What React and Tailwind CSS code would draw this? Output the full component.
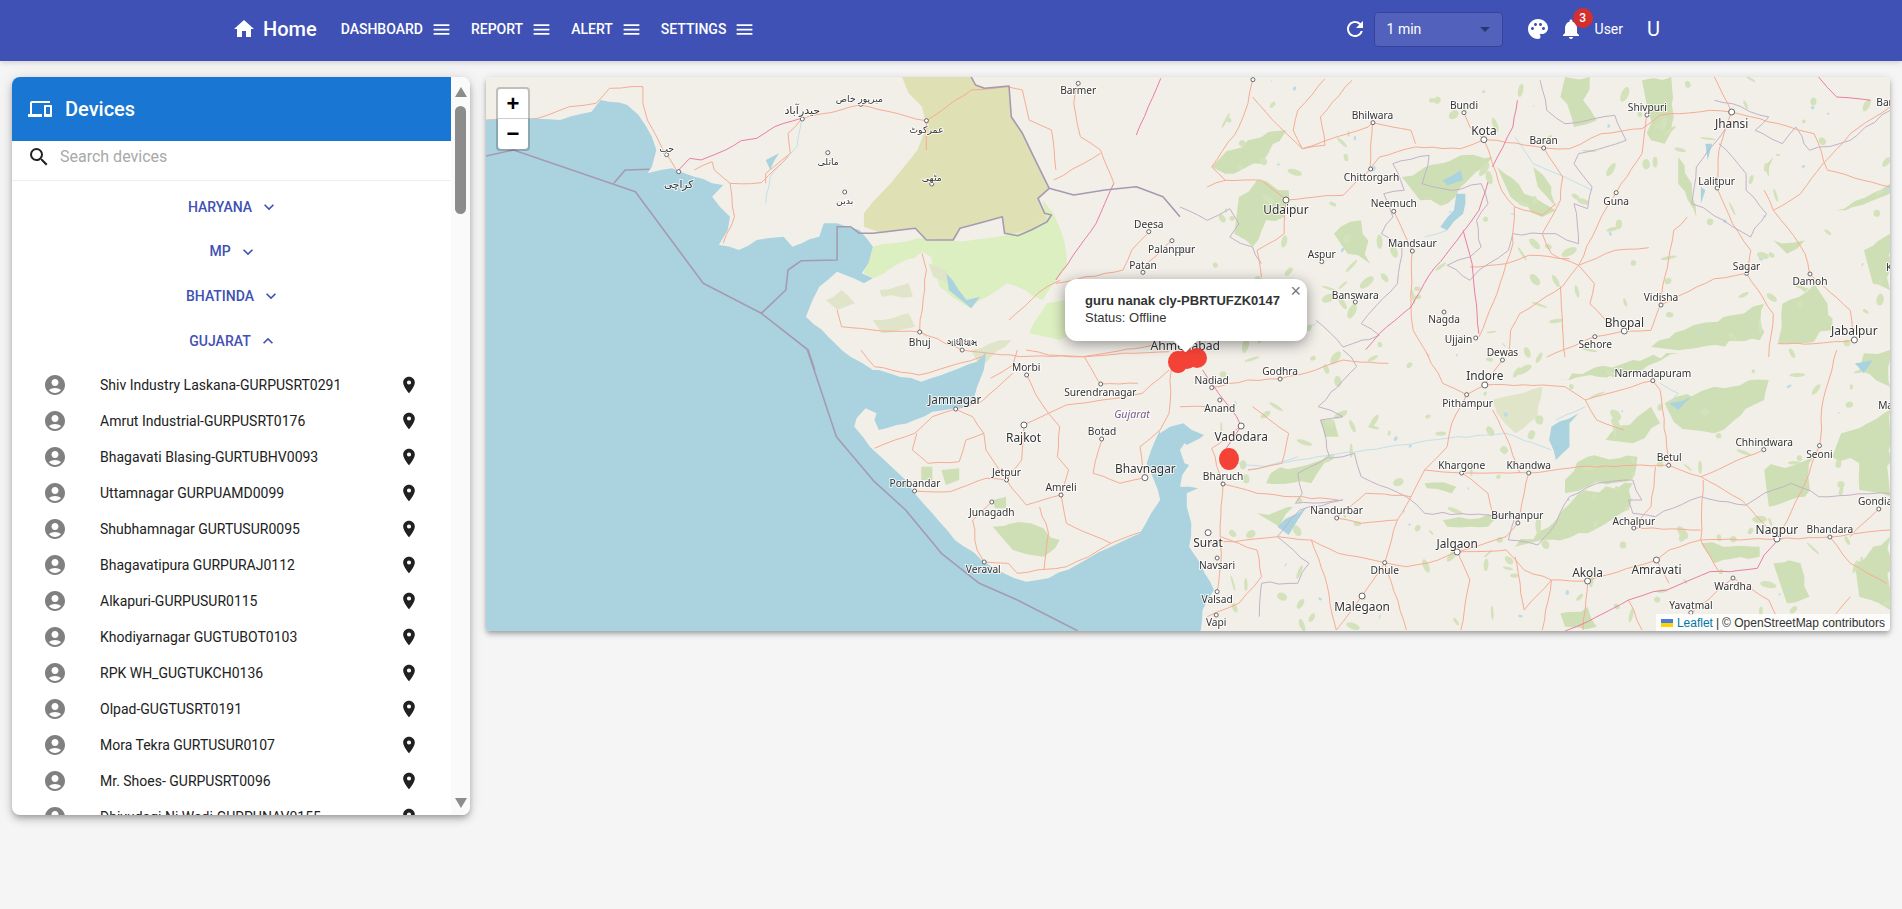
import {
  MdAccountCircle,
  MdArrowDropDown,
  MdDevices,
  MdExpandLess,
  MdExpandMore,
  MdHome,
  MdLocationOn,
  MdMenu,
  MdNotifications,
  MdPalette,
  MdRefresh,
  MdSearch,
} from 'react-icons/md';

const navItems = ['DASHBOARD', 'REPORT', 'ALERT', 'SETTINGS'];

const regions = [
  { name: 'HARYANA' },
  { name: 'MP' },
  { name: 'BHATINDA' },
  { name: 'GUJARAT', open: true },
];

const devices = [
  'Shiv Industry Laskana-GURPUSRT0291',
  'Amrut Industrial-GURPUSRT0176',
  'Bhagavati Blasing-GURTUBHV0093',
  'Uttamnagar GURPUAMD0099',
  'Shubhamnagar GURTUSUR0095',
  'Bhagavatipura GURPURAJ0112',
  'Alkapuri-GURPUSUR0115',
  'Khodiyarnagar GUGTUBOT0103',
  'RPK WH_GUGTUKCH0136',
  'Olpad-GUGTUSRT0191',
  'Mora Tekra GURTUSUR0107',
  'Mr. Shoes- GURPUSRT0096',
  'Dhiyudagi Ni Wadi-GURPUNAV0155',
];

// the map is traced in four overlapping tiles, each with its own origin and x scale
const frames = {
  A: [480, 70, 2.24],
  B: [486, 350, 2.24],
  C: [1180, 77, 2.208],
  D: [1180, 350, 2.208],
  E: [1000, 260, 3],
};

const at = (f, x, y) => [frames[f][0] + x / frames[f][2], frames[f][1] + y / 3];

const seeded = (seed) => {
  let s = seed >>> 0;
  return () => {
    s = (s * 1664525 + 1013904223) >>> 0;
    return s / 4294967296;
  };
};

// splits long segments and nudges the new points, so traced lines don't look ruler-straight
const pts = (f, str, amp = 0) => {
  const list = str
    .trim()
    .split(/\s+/)
    .map((p) => {
      const [x, y] = p.split(',').map(Number);
      return at(f, x, y);
    });
  const rand = seeded(str.length * 7919 + Math.round(list[0][0] * list[0][1]));
  const out = [];
  list.forEach(([x, y], i) => {
    if (amp && i > 0) {
      const [px, py] = list[i - 1];
      const steps = Math.floor(Math.hypot(x - px, y - py) / 9);
      for (let k = 1; k < steps; k += 1) {
        const t = k / steps;
        out.push([px + (x - px) * t + (rand() - 0.5) * amp, py + (y - py) * t + (rand() - 0.5) * amp]);
      }
    }
    out.push([x, y]);
  });
  return out.map((p) => p.map((n) => n.toFixed(1)).join(',')).join(' ');
};

const seaOutline = [
  ['A', '13,150 100,145 180,150 250,125 270,90 330,105 355,135 385,200 395,240 385,290 375,310 430,295 480,320 520,340 545,345 520,380 560,440 555,480 535,525 580,540 620,510 680,500 700,530 760,500 770,460 800,460 850,480 880,530 870,580 855,610 880,625 860,640 800,605 760,650 745,690 730,740 780,800 830,860 880,900'],
  ['B', '880,60 975,95 1060,55 1100,35 1120,5 1115,60 1100,110 1090,160 1050,175 1000,185 960,210 920,225 880,240 870,210 875,190 850,175 830,205 825,230 860,290 900,340 940,390 960,430 1000,490 1050,570 1110,630 1160,670 1210,695 1260,685 1330,640 1400,590 1465,550 1490,490 1510,450 1505,420 1490,370 1480,340 1490,300 1510,240'],
  ['E', '480,520 510,500 550,490 575,510 612,525 600,535 560,555'],
  ['D', '10,280 0,300 10,340 20,345 5,375 0,410 40,415 15,430 15,470 25,520 20,590 45,640 75,720 50,780 45,850'],
];

const seaPoints = `486,200 ${seaOutline.map(([f, s]) => pts(f, s, 2.2)).join(' ')} 486,640 486,200`;

const olive = pts('A', '945,20 1100,20 1110,45 1130,55 1185,48 1190,140 1215,190 1240,260 1275,355 1250,385 1265,430 1280,435 1270,455 1235,480 1205,497 1175,490 1170,440 1130,455 1075,475 1060,510 1000,510 975,475 900,490 860,470 860,430 880,395 920,340 950,290 980,240 1000,170 990,110 960,70');

const paleGreen = [
  ['A', '860,610 880,530 980,505 1060,512 1180,495 1235,480 1270,450 1260,390 1285,430 1310,520 1315,590 1285,640 1260,690 1180,640 1100,715 1030,650 1010,560 990,545 880,625'],
  ['A', '1230,790 1270,700 1330,680 1350,780 1300,810'],
];

const mutedPatches = [
  ['A', '895,660 960,640 970,680 900,680'],
  ['A', '775,690 810,660 840,700 800,720'],
  ['A', '880,750 960,730 975,770 900,790'],
  ['A', '1005,580 1045,600 1050,640 1015,620'],
  ['A', '1100,840 1190,810 1120,890'],
  ['D', '690,150 800,110 790,200 740,250 700,190'],
];

const forest = [
  ['D', '1070,160 1180,110 1300,90 1290,150 1200,240 1130,240 1090,215'],
  ['D', '940,270 1010,200 1040,170 1060,220 1000,280'],
  ['D', '850,390 900,320 1010,320 1000,385 900,410 850,430'],
  ['D', '740,590 830,510 880,430 1000,400 990,480 900,550 800,570'],
  ['D', '580,510 700,500 680,530 590,530'],
  ['D', '1460,250 1568,180 1568,440 1500,420 1500,340 1440,320'],
  ['D', '1290,360 1400,320 1380,440 1300,470'],
  ['D', '170,490 250,470 220,530'],
  ['D', '830,90 1000,30 1100,10 1000,70 860,90'],
  ['D', '1510,10 1568,0 1568,110 1500,60'],
  ['D', '1150,580 1280,590 1280,620 1180,640'],
  ['D', '1310,640 1370,640 1390,740 1340,760'],
  ['D', '1490,640 1568,560 1568,780 1500,740'],
  ['D', '310,210 340,210 350,260 320,260'],
  ['D', '540,400 610,410 600,430 545,415'],
  ['D', '200,370 330,320 290,400 190,400'],
  ['D', '840,790 900,770 920,830 850,830'],
  ['C', '850,0 905,0 890,70 920,130 870,150 840,60'],
  ['C', '1020,10 1085,0 1090,120 1070,200 1040,190 1030,80'],
  ['C', '70,270 150,190 235,160 180,260 100,290'],
  ['C', '130,360 170,310 240,340 230,420 190,430 160,510 120,470'],
  ['C', '490,300 620,235 690,240 620,330 590,380 530,370'],
  ['C', '700,270 760,350 830,400 800,420 730,360'],
  ['C', '1320,800 1330,680 1400,620 1430,680 1440,760 1370,800'],
  ['C', '1450,400 1568,320 1568,350 1470,400'],
  ['C', '1100,240 1130,320 1140,420 1100,320'],
  ['C', '340,470 400,430 420,560 370,530'],
  ['C', '1510,520 1568,470 1568,640 1530,620'],
  ['C', '1040,810 1200,720 1290,680 1280,790 1100,820'],
  ['C', '1290,270 1310,240 1300,300'],
  ['C', '1310,490 1380,490 1340,530'],
  ['C', '780,270 820,330 830,390 790,330'],
  ['B', '1135,530 1220,520 1285,570 1250,620 1180,600'],
  ['B', '975,350 1000,350 1000,390 975,390'],
  ['B', '1020,360 1060,355 1060,390 1030,405'],
  ['B', '1135,450 1165,440 1165,475 1140,475'],
];

const lakes = [
  ['C', '575,450 605,400 610,350 630,350 625,410 590,460'],
  ['C', '580,310 620,280 625,310 590,325'],
  ['C', '1160,200 1175,200 1165,250'],
  ['C', '1150,330 1160,340 1150,380'],
  ['D', '820,230 880,190 860,220 860,290 830,330 815,270'],
  ['D', '215,530 280,470 260,510 240,555'],
  ['D', '1080,160 1130,140 1100,180'],
  ['D', '1490,40 1530,30 1510,70'],
  ['A', '1045,610 1090,690 1120,680 1100,715 1050,660'],
  ['A', '640,270 670,250 650,300'],
];

const rivers = [
  ['D', '150,360 260,330 410,300 590,265 720,250 820,300'],
  ['D', '895,170 830,210'],
  ['D', '1060,100 1100,130 1080,160'],
  ['C', '740,180 780,260 850,300 910,340'],
  ['C', '590,460 540,480'],
  ['C', '300,740 250,770 200,790'],
  ['A', '720,150 710,230 650,320 640,400'],
  ['D', '130,340 190,350 260,320'],
];

const roads = [
  ['A', '13,150 130,145 200,110 260,100 290,55 365,50 365,100 375,150 410,240 440,300'],
  ['A', '480,300 520,275 525,300 560,340 630,338 690,260'],
  ['A', '560,340 570,440 545,520'],
  ['A', '720,147 850,105 1000,152 1000,240'],
  ['A', '720,147 690,190 695,250 640,310 640,340'],
  ['A', '1000,152 1100,60 1180,50 1215,60 1230,150 1280,180 1290,300'],
  ['A', '1340,40 1330,100 1345,200 1390,240 1420,340'],
  ['A', '1285,330 1390,250'],
  ['A', '1500,485 1460,540 1440,600 1400,610 1290,640'],
  ['A', '1550,510 1480,600'],
  ['A', '990,550 1000,600 985,780 1000,800'],
  ['A', '800,720 810,770 880,780 985,786 1080,840'],
  ['A', '1080,840 1210,860 1350,860 1510,825'],
  ['A', '1185,750 1270,650 1300,630'],
  ['B', '840,0 870,50 970,75 1060,40 1110,20'],
  ['B', '1210,0 1260,15 1340,20 1450,10 1530,5'],
  ['B', '1340,20 1370,90 1377,102 1460,100'],
  ['B', '1130,85 1180,45 1190,0'],
  ['B', '1211,75 1230,130 1260,190 1205,225'],
  ['B', '1052,177 1110,155 1180,70'],
  ['B', '1052,177 1090,200 1115,250 1120,300 1140,340 1166,390'],
  ['B', '1205,225 1200,330 1166,390'],
  ['B', '1260,190 1285,230 1280,320 1305,360 1288,435'],
  ['B', '1260,190 1300,165 1380,150 1470,130 1530,60'],
  ['B', '1380,267 1360,370 1420,400 1476,383'],
  ['B', '1288,435 1300,520 1400,580'],
  ['B', '1166,390 1120,385 1040,425 960,423'],
  ['B', '870,295 960,250 1000,200 1052,177'],
  ['B', '965,250 955,300 990,340 1060,335 1075,270 1115,250'],
  ['B', '1166,390 1210,465 1288,435'],
  ['B', '1240,470 1260,550 1250,660'],
  ['B', '1133,456 1090,510 1100,600 1116,636'],
  ['B', '1116,636 1170,640 1190,670 1300,650 1350,620 1400,580 1470,545'],
  ['B', '1476,383 1465,290 1510,240 1530,190 1535,60'],
  ['C', '160,10 150,80 130,150 70,270 100,310 60,330'],
  ['C', '160,60 220,150 270,215 320,205 310,120 380,10'],
  ['C', '270,215 250,160 260,100 320,5'],
  ['C', '100,310 180,310 235,369 300,360 360,355 420,276 440,240 520,210 620,215 671,188'],
  ['C', '425,137 415,150 345,180 270,215'],
  ['C', '425,137 510,160 520,200'],
  ['C', '425,137 420,270'],
  ['C', '627,107 640,150 671,188'],
  ['C', '671,188 700,190 803,213 860,215 930,170 1020,155 1060,115 1170,100 1218,105'],
  ['C', '671,188 690,260 710,340 740,390 800,415 830,380'],
  ['C', '803,213 845,300 840,370 800,470 820,530 880,565'],
  ['C', '1030,114 1020,230 963,347 930,420 880,565 845,628 750,710 730,760 725,840'],
  ['C', '880,565 960,520 1035,512'],
  ['C', '880,565 915,620 905,680 940,730'],
  ['C', '720,560 770,535 860,545'],
  ['C', '720,560 700,650 660,780'],
  ['C', '738,390 735,500 720,560 640,570'],
  ['C', '472,403 495,470 513,522 510,680 515,760 550,840'],
  ['C', '1218,105 1190,220 1186,333 1220,440 1260,520 1251,589'],
  ['C', '1251,589 1180,605 1060,684 1040,760 981,762 916,779 810,840'],
  ['C', '1390,591 1380,530 1340,450 1310,400'],
  ['C', '1251,589 1310,710 1300,840'],
  ['C', '1489,789 1400,800 1320,800'],
  ['C', '1218,105 1400,170 1430,280 1568,330'],
  ['C', '1420,260 1370,350 1310,400 1290,340'],
  ['C', '1568,90 1480,170 1420,260'],
  ['C', '1180,0 1218,105'],
  ['C', '235,369 230,470 170,520 180,600'],
  ['C', '1060,684 1090,460 1120,420'],
  ['C', '1391,591 1480,700 1489,789'],
  ['C', '840,628 850,840'],
  ['D', '712,30 673,105 633,134 580,100 545,10'],
  ['D', '673,105 800,105 850,110 895,150 920,210 980,240'],
  ['D', '895,150 1044,92 1060,120 1080,346'],
  ['D', '1080,346 1150,380 1240,450 1318,567'],
  ['D', '1080,346 880,350 770,369 622,369 540,360'],
  ['D', '633,134 600,220 590,290 540,360 510,440 480,510 452,638 500,650 570,630 612,606 720,600 760,660 820,690 900,693 1052,630'],
  ['D', '452,638 350,610 290,570 215,560 120,575 62,578'],
  ['D', '346,504 410,430 510,440'],
  ['D', '346,504 400,520 480,510'],
  ['D', '770,369 760,430 746,519 720,560 612,606'],
  ['D', '690,180 720,260 750,370'],
  ['D', '622,369 680,430 690,490'],
  ['D', '135,228 70,295 95,402 90,500 90,640 82,725'],
  ['D', '95,402 170,430 250,440 350,450'],
  ['D', '221,87 150,90 70,113'],
  ['D', '221,87 300,60 360,30 460,40'],
  ['D', '0,170 60,170'],
  ['D', '160,170 240,250 225,340 150,360'],
  ['D', '1318,567 1150,570 1080,600 1052,630'],
  ['D', '1318,567 1435,561 1568,540'],
  ['D', '1289,299 1150,380'],
  ['D', '1412,287 1380,400 1320,567'],
  ['D', '1420,150 1412,287'],
  ['D', '900,693 890,840'],
  ['D', '820,690 800,840'],
  ['D', '612,606 640,690 620,840'],
  ['D', '452,638 500,840'],
  ['D', '402,738 345,840'],
  ['D', '402,738 452,638'],
  ['D', '1221,684 1130,788'],
  ['D', '1221,684 1300,750 1330,840'],
  ['D', '1052,630 1080,700'],
  ['D', '1155,390 1150,570 1190,665'],
  ['D', '1002,534 1150,540'],
  ['D', '1002,534 1040,470 1050,350'],
  ['D', '1450,0 1420,150'],
  ['D', '1435,561 1480,640 1560,700'],
  ['D', '90,560 170,600 180,680 130,760 60,800'],
  ['D', '290,570 320,680 345,840'],
  ['D', '740,620 760,780 820,690'],
  ['D', '990,750 1020,840'],
  ['D', '1480,740 1420,840'],
  ['D', '1540,480 1480,560'],
];

const motorways = [
  ['A', '445,300 470,265 495,270 550,240 585,212 620,205 660,170 720,145'],
  ['A', '1525,25 1470,195'],
  ['A', '1420,340 1380,460 1290,630'],
  ['C', '1410,0 1450,60 1525,70'],
  ['C', '745,70 735,150 690,270'],
  ['C', '680,315 660,400 600,510 550,595 510,690 440,770 410,818'],
  ['C', '625,460 645,560 660,770'],
  ['D', '50,60 85,130 125,200 135,228 100,300'],
  ['D', '850,843 900,815 990,750 1045,725 1075,720 1170,665 1215,665 1275,655 1290,615 1320,570'],
];

const borders = [
  ['C', '795,10 810,100 850,140 960,115 985,190 880,230 870,260 910,330 900,395 870,380 880,500 830,470 800,470 735,470 725,520 660,580 640,610 590,565 640,540 665,510 655,430 680,380 665,320 600,340 535,320 550,235 470,260 495,340 450,350 470,420 445,470 490,500 480,620 400,740 440,775 360,810 300,730'],
  ['C', '1180,70 1220,80 1300,120 1270,160 1330,200 1360,150 1390,220 1480,190 1568,100'],
  ['C', '1220,130 1140,270 1130,380 1200,430 1260,480 1295,410 1250,340 1250,290 1190,200'],
  ['C', '0,390 60,430 110,395 130,440 110,480 160,510 180,560'],
  ['D', '360,0 390,50 305,170 360,200 310,210 330,320 260,370 270,430 255,460 360,450 265,480 215,560 285,640 260,700 180,700 175,800'],
  ['D', '330,325 385,310 400,380 500,440 540,490 680,495 740,500 725,570 790,585 830,520 860,440 920,400 1000,390 1020,450 990,450 1000,490 1050,500 1150,440 1250,465 1290,430 1350,400 1410,440 1568,430'],
];

const countryBorders = [
  ['A', '1100,20 1110,45 1130,55 1185,48 1190,140 1215,190 1240,260 1275,355 1250,385 1265,430 1280,435 1270,455 1235,480 1205,497 1175,490 1170,440 1130,455 1075,475 1060,510 1000,510 975,475 880,490 850,490 830,470 800,470 800,570 720,572 690,600 685,660 630,730 500,640 348,365 75,240 13,258'],
  ['A', '630,730 735,840 750,900'],
  ['A', '300,340 325,300 380,298'],
  ['B', '720,0 745,100 785,260 870,395 940,480 1020,610 1105,700 1190,750 1325,842'],
  ['A', '1275,355 1330,375 1400,360 1470,350 1530,380 1568,440'],
];

// frame, x, y of the text centre, text, font size, dot x, dot y
const labels = [
  ['A', 1340, 60, 'Barmer', 12, 1340, 40],
  ['A', 850, 85, 'میرپور خاص', 11, 853, 103],
  ['A', 722, 120, 'حیدرآباد', 13, 722, 147],
  ['A', 1000, 180, 'عمرکوٹ', 11, 1000, 152],
  ['A', 780, 275, 'ماتلی', 11, 779, 248],
  ['A', 1012, 322, 'مٹھی', 11, 1012, 342],
  ['A', 817, 392, 'بدین', 11, 817, 366],
  ['A', 418, 236, 'حب', 11, 418, 254],
  ['A', 445, 342, 'کراچی', 12.5, 445, 305],
  ['A', 1498, 463, 'Deesa', 12, 1498, 485],
  ['A', 1545, 537, 'Palanpur', 12, 1550, 512],
  ['A', 1485, 585, 'Patan', 12, 1485, 607],
  ['A', 985, 817, 'Bhuj', 12, 985, 786],
  ['A', 1080, 817, 'ગાંધીધામ', 11, 1080, 840],
  ['B', 1210, 52, 'Morbi', 12, 1211, 75],
  ['B', 1376, 128, 'Surendranagar', 12, 1377, 102],
  ['B', 1050, 150, 'Jamnagar', 13.8, 1052, 177],
  ['B', 1204, 264, 'Rajkot', 14, 1205, 225],
  ['B', 1380, 244, 'Botad', 12, 1379, 267],
  ['B', 1477, 356, 'Bhavnagar', 14, 1476, 383],
  ['B', 1166, 367, 'Jetpur', 12, 1166, 390],
  ['B', 961, 400, 'Porbandar', 12, 960, 423],
  ['B', 1288, 411, 'Amreli', 12, 1288, 435],
  ['B', 1133, 486, 'Junagadh', 12, 1133, 456],
  ['B', 1114, 659, 'Veraval', 12, 1116, 636],
  ['C', 425, 114, 'Bhilwara', 12, 426, 137],
  ['C', 627, 86, 'Bundi', 12, 627, 107],
  ['C', 671, 162, 'Kota', 14, 671, 188],
  ['C', 803, 190, 'Baran', 12, 803, 213],
  ['C', 1032, 92, 'Shivpuri', 12, 1031, 114],
  ['C', 1218, 141, 'Jhansi', 14, 1218, 105],
  ['C', 423, 302, 'Chittorgarh', 12, 421, 276],
  ['C', 234, 399, 'Udaipur', 14, 234, 369],
  ['C', 472, 380, 'Neemuch', 12, 472, 403],
  ['C', 513, 499, 'Mandsaur', 12, 513, 522],
  ['C', 313, 533, 'Aspur', 12, 313, 554],
  ['C', 963, 372, 'Guna', 12, 963, 347],
  ['C', 1185, 312, 'Lalitpur', 12, 1186, 333],
  ['C', 1251, 567, 'Sagar', 12, 1251, 589],
  ['C', 1391, 612, 'Damoh', 12, 1391, 591],
  ['C', 387, 654, 'Banswara', 12, 387, 675],
  ['C', 583, 728, 'Nagda', 12, 583, 705],
  ['C', 615, 788, 'Ujjain', 12, 653, 783],
  ['C', 1062, 662, 'Vidisha', 12, 1062, 684],
  ['C', 981, 736, 'Bhopal', 14, 981, 762],
  ['C', 917, 803, 'Sehore', 12, 916, 779],
  ['C', 1489, 762, 'Jabalpur', 14, 1489, 789],
  ['C', 1558, 76, 'Ban', 12],
  ['C', 1566, 570, 'K', 12],
  ['C', 15, 516, 'pur', 12],
  ['C', 160, 0, '', 12, 161, 8],
  ['E', 556, 257, 'Ahmedabad', 14.3],
  ['D', 221, 63, 'Godhra', 12, 221, 87],
  ['D', 70, 90, 'Nadiad', 12, 70, 113],
  ['D', 88, 176, 'Anand', 12, 88, 150],
  ['D', 135, 260, 'Vadodara', 14, 135, 228],
  ['D', 95, 380, 'Bharuch', 12, 95, 402],
  ['D', 712, 8, 'Dewas', 12, 712, 30],
  ['D', 673, 76, 'Indore', 14, 673, 105],
  ['D', 635, 160, 'Pithampur', 12, 633, 134],
  ['D', 1044, 71, 'Narmadapuram', 12, 1044, 92],
  ['D', 622, 346, 'Khargone', 12, 622, 369],
  ['D', 770, 347, 'Khandwa', 12, 770, 369],
  ['D', 1080, 323, 'Betul', 12, 1079, 346],
  ['D', 1290, 277, 'Chhindwara', 12, 1289, 299],
  ['D', 1412, 314, 'Seoni', 12, 1412, 287],
  ['D', 346, 481, 'Nandurbar', 12, 346, 504],
  ['D', 745, 496, 'Burhanpur', 12, 746, 519],
  ['D', 1002, 513, 'Achalpur', 12, 1002, 534],
  ['D', 1535, 455, 'Gondia', 12, 1543, 477],
  ['D', 1435, 538, 'Bhandara', 12, 1435, 561],
  ['D', 1318, 539, 'Nagpur', 14, 1318, 567],
  ['D', 62, 578, 'Surat', 14, 62, 548],
  ['D', 612, 580, 'Jalgaon', 14, 612, 606],
  ['D', 82, 646, 'Navsari', 12, 82, 624],
  ['D', 452, 662, 'Dhule', 12, 452, 638],
  ['D', 900, 667, 'Akola', 14, 900, 693],
  ['D', 1052, 658, 'Amravati', 14, 1052, 630],
  ['D', 1221, 708, 'Wardha', 12, 1221, 684],
  ['D', 1128, 766, 'Yavatmal', 12, 1128, 788],
  ['D', 82, 749, 'Valsad', 12, 82, 725],
  ['D', 402, 770, 'Malegaon', 14, 402, 738],
  ['D', 80, 818, 'Vapi', 12, 80, 795],
  ['D', 1558, 165, 'Ma', 12],
];

// small woods and ponds, too many to trace one by one
const specks = (() => {
  const rand = seeded(4242);
  return Array.from({ length: 300 }, () => ({
    x: 1215 + rand() * 680,
    y: 77 + rand() * 556,
    rx: 1.5 + rand() * 7,
    ry: 1 + rand() * 3,
    a: rand() * 180,
    water: rand() < 0.16,
  }));
})();

function Shapes({ items, className, amp = 4 }) {
  return (
    <g className={className}>
      {items.map(([f, s], i) => (
        <polygon key={i} points={pts(f, s, amp)} />
      ))}
    </g>
  );
}

function Lines({ items, className, amp = 1.6, width = 1 }) {
  return (
    <g className={className} fill="none" strokeLinejoin="round" strokeWidth={width}>
      {items.map(([f, s], i) => (
        <polyline key={i} points={pts(f, s, amp)} />
      ))}
    </g>
  );
}

function MapDrawing() {
  const [gx, gy] = at('B', 1447, 193);

  return (
    <svg viewBox="486 77 1404 554" className="block h-[554px] w-[1404px] bg-[#f2efe9] blur-[0.3px]">
      <polygon points={olive} className="fill-[#dfe0b4]" />
      <Shapes items={paleGreen} className="fill-[#dcefc0]" />
      <Shapes items={mutedPatches} className="fill-[#e0e4c8]" />
      <Shapes items={forest} className="fill-[#cfdfb5]" amp={7} />
      <g>
        {specks.map((s, i) => (
          <ellipse
            key={i}
            cx={s.x}
            cy={s.y}
            rx={s.water ? s.rx / 3 : s.rx}
            ry={s.water ? s.ry / 2 : s.ry}
            transform={`rotate(${s.a} ${s.x} ${s.y})`}
            className={s.water ? 'fill-[#bcdde6]' : 'fill-[#d3e2bb]'}
          />
        ))}
      </g>
      <Shapes items={lakes} className="fill-[#aad3df]" amp={3} />
      <Lines items={rivers} className="stroke-[#c3e0e8]" />
      <Lines items={borders} className="stroke-[#c2b2c8]" amp={3} />
      <Lines items={roads} className="stroke-[#f6ac93]" />
      <Lines items={motorways} className="stroke-[#e97f9f]" amp={0.8} />
      <polygon points={seaPoints} className="fill-[#aad3df]" />
      <Lines items={countryBorders} className="stroke-[#a69ab2]" amp={0} width={1.6} />

      <g fill="#fff" stroke="#666" strokeWidth="1">
        {labels.filter((l) => l[5] !== undefined).map((l) => {
          const [x, y] = at(l[0], l[5], l[6]);
          return <circle key={`${l[3]}${x}`} cx={x} cy={y} r={l[4] >= 14 ? 3 : 2} />;
        })}
      </g>
      <g
        className="[font-family:'Noto_Sans','DejaVu_Sans',sans-serif] [paint-order:stroke]"
        fill="#333"
        stroke="rgba(255,255,255,0.75)"
        strokeWidth="2"
        textAnchor="middle"
      >
        {labels.filter((l) => l[3]).map((l) => {
          const [x, y] = at(l[0], l[1], l[2]);
          const size = l[4] * 0.85;
          return (
            <text key={l[3]} x={x} y={y + size * 0.36} fontSize={size}>
              {l[3]}
            </text>
          );
        })}
        <text x={gx} y={gy + 4} fontSize="10.6" fontStyle="italic" fill="#7a5c8a">
          Gujarat
        </text>
      </g>

      <g className="fill-[#f44336]">
        <ellipse cx="1178" cy="362" rx="10" ry="11" />
        <ellipse cx="1187" cy="359" rx="10" ry="10" />
        <ellipse cx="1197" cy="358" rx="10" ry="10" />
        <ellipse cx="1229" cy="459" rx="10" ry="11" />
      </g>
    </svg>
  );
}

function MapPopup() {
  return (
    <div className="absolute left-[579px] top-[202px] [font-family:'Liberation_Sans',sans-serif]">
      <div className="relative h-[62px] w-[242px] rounded-[12px] bg-white pl-[20px] pt-[13px] text-[13px] leading-[17px] text-[#333] shadow-[0_3px_14px_rgba(0,0,0,0.4)]">
        <div className="font-bold">guru nanak cly-PBRTUFZK0147</div>
        <div>Status: Offline</div>
        <span className="absolute right-[6px] top-[3px] text-[18px] leading-[18px] text-[#757575]">×</span>
      </div>
      <div className="absolute left-[100px] top-[62px] h-[11px] w-[40px] overflow-hidden">
        <div className="mx-auto -mt-[9px] h-[17px] w-[17px] rotate-45 bg-white" />
      </div>
    </div>
  );
}

function MapPanel() {
  return (
    <div className="relative h-[554px] flex-1 overflow-hidden rounded bg-white shadow-[0_2px_4px_-1px_rgba(0,0,0,0.2),0_4px_5px_rgba(0,0,0,0.14),0_1px_10px_rgba(0,0,0,0.12)]">
      <MapDrawing />
      <div className="absolute left-[10px] top-[10px] w-[34px] rounded border-2 border-black/20 bg-clip-padding [font-family:'Liberation_Sans',sans-serif]">
        <div className="flex h-[30px] items-center justify-center rounded-t-sm border-b border-[#ccc] bg-white text-[22px] font-bold leading-none text-black">+</div>
        <div className="flex h-[30px] items-center justify-center rounded-b-sm bg-white text-[22px] font-bold leading-none text-black">−</div>
      </div>
      <MapPopup />
      <div className="absolute bottom-0 right-0 flex h-[17px] items-center bg-white/80 px-[5px] text-[12px] text-[#333] [font-family:'Liberation_Sans',sans-serif]">
        <svg viewBox="0 0 12 8" className="mr-[4px] h-[8px] w-[12px]">
          <rect width="12" height="4" fill="#4C7BE1" />
          <rect y="4" width="12" height="4" fill="#FFD500" />
        </svg>
        <span className="text-[#0078a8]">Leaflet</span>
        <span className="mx-[3px]">|</span>
        <span>© OpenStreetMap contributors</span>
      </div>
    </div>
  );
}

function Sidebar() {
  return (
    <aside className="flex h-[738px] w-[458px] shrink-0 overflow-hidden rounded-lg bg-white shadow-[0_3px_5px_-1px_rgba(0,0,0,0.2),0_5px_8px_rgba(0,0,0,0.14),0_1px_14px_rgba(0,0,0,0.12)]">
      <div className="min-w-0 flex-1 overflow-hidden">
        <div className="flex h-[64px] items-center gap-[13px] bg-[#1976d2] pl-[16px] text-white">
          <MdDevices size={24} />
          <span className="text-[20px] font-medium">Devices</span>
        </div>
        <div className="flex h-[40px] items-center gap-[9px] border-b border-[#eeeeee] pb-[8px] pl-[15px]">
          <MdSearch size={24} className="text-[#212121]" />
          <span className="text-[16px] text-[#a8a8a8]">Search devices</span>
        </div>
        <div className="pt-[4px]">
          {regions.map((r) => (
            <div key={r.name} className="flex h-[44.6px] items-center justify-center gap-[7px] pl-[4px] text-[14px] font-medium text-[#3f51b5]">
              <span>{r.name}</span>
              {r.open ? <MdExpandLess size={20} /> : <MdExpandMore size={20} />}
            </div>
          ))}
        </div>
        <div className="pt-[4px]">
          {devices.map((d) => (
            <div key={d} className="flex h-[36px] items-center pl-[31px] pr-[32px] text-[14px] text-[#212121]">
              <MdAccountCircle size={24} className="shrink-0 text-[#808080]" />
              <span className="ml-[33px] flex-1 truncate">{d}</span>
              <MdLocationOn size={20} className="shrink-0 text-[#212121]" />
            </div>
          ))}
        </div>
      </div>
      <div className="flex w-[19px] shrink-0 flex-col items-center bg-[#fafafa]">
        <div className="mt-[10px] h-0 w-0 border-x-[6.5px] border-b-[10px] border-x-transparent border-b-[#8c8c8c]" />
        <div className="mt-[9px] h-[108px] w-[11px] rounded-[6px] bg-[#8c8c8c]" />
        <div className="mt-[584px] h-0 w-0 border-x-[6.5px] border-t-[10px] border-x-transparent border-t-[#8c8c8c]" />
      </div>
    </aside>
  );
}

function Header() {
  return (
    <header className="flex h-[61px] items-center justify-between bg-[#3f51b5] pb-[3px] pl-[232px] pr-[242px] text-white shadow-[0_2px_4px_-1px_rgba(0,0,0,0.1),0_4px_5px_rgba(0,0,0,0.05)]">
      <div className="flex items-center">
        <MdHome size={24} />
        <span className="ml-[7px] text-[20px] font-medium">Home</span>
        <nav className="ml-[24px] flex items-center gap-[19px]">
          {navItems.map((item) => (
            <div key={item} className="flex items-center gap-[8px] text-[14px] font-medium">
              <span>{item}</span>
              <MdMenu size={21} />
            </div>
          ))}
        </nav>
      </div>
      <div className="flex items-center">
        <MdRefresh size={24} />
        <div className="ml-[7px] flex h-[35px] w-[129px] items-center justify-between rounded border border-[#35439a] bg-white/10 pl-[12px] pr-[5px] text-[14px]">
          <span>1 min</span>
          <MdArrowDropDown size={24} className="text-[#2b376f]" />
        </div>
        <MdPalette size={24} className="ml-[23px]" />
        <div className="relative ml-[9px]">
          <MdNotifications size={24} />
          <span className="absolute -right-[10px] -top-[9px] flex h-[20px] w-[20px] items-center justify-center rounded-full bg-[#d32f2f] text-[12px] font-medium">3</span>
        </div>
        <span className="ml-[12px] text-[14px]">User</span>
        <span className="ml-[24px] text-[20px]">U</span>
      </div>
    </header>
  );
}

export default function App() {
  return (
    <div className="min-h-screen bg-[#f5f5f5] [font-family:Roboto,sans-serif]">
      <Header />
      <main className="flex items-start gap-[16px] px-[12px] pt-[16px]">
        <Sidebar />
        <MapPanel />
      </main>
    </div>
  );
}
